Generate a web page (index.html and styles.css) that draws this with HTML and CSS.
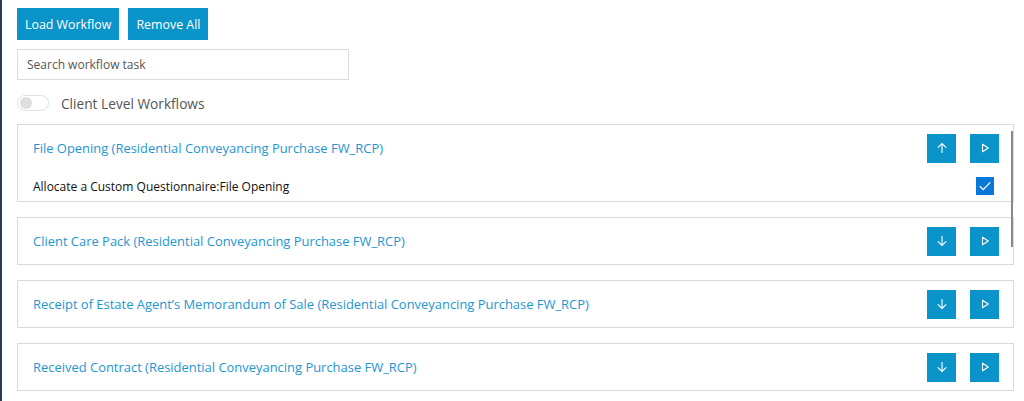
FILE: index.html
```html
<!DOCTYPE html>
<html>
<head>
<meta charset="utf-8">
<link rel="stylesheet" href="styles.css">
</head>
<body>
<div class="app">
  <div class="toolbar">
    <button class="btn">Load Workflow</button>
    <button class="btn">Remove All</button>
  </div>
  <input class="search" type="text" placeholder="Search workflow task">
  <div class="toggle-row">
    <span class="toggle"><span class="knob"></span></span>
    <span class="toggle-label">Client Level Workflows</span>
  </div>
  <div class="list">
    <div class="scrollthumb"></div>
    <div class="panel">
      <div class="panel-head">
        <span class="title">File Opening (Residential Conveyancing Purchase FW_RCP)</span>
        <span class="actions">
          <button class="icon-btn"><svg width="12" height="12" viewBox="0 0 12 12"><path d="M6 11V1.5M1.8 5.7L6 1.5l4.2 4.2" fill="none" stroke="#fff" stroke-width="1.1"/></svg></button>
          <button class="icon-btn"><svg width="12" height="12" viewBox="0 0 12 12"><path d="M3.5 2.2v7.6L9.3 6z" fill="none" stroke="#fff" stroke-width="1.1" stroke-linejoin="round"/></svg></button>
        </span>
      </div>
      <div class="panel-body">
        <span class="task">Allocate a Custom Questionnaire:File Opening</span>
        <span class="check"><svg width="14" height="14" viewBox="0 0 14 14"><path d="M1.8 7.2l3.4 3.4 7-7.2" fill="none" stroke="#fff" stroke-width="1.3"/></svg></span>
      </div>
    </div>
    <div class="panel">
      <div class="panel-head">
        <span class="title">Client Care Pack (Residential Conveyancing Purchase FW_RCP)</span>
        <span class="actions">
          <button class="icon-btn"><svg width="12" height="12" viewBox="0 0 12 12"><path d="M6 1v9.5M1.8 6.3L6 10.5l4.2-4.2" fill="none" stroke="#fff" stroke-width="1.1"/></svg></button>
          <button class="icon-btn"><svg width="12" height="12" viewBox="0 0 12 12"><path d="M3.5 2.2v7.6L9.3 6z" fill="none" stroke="#fff" stroke-width="1.1" stroke-linejoin="round"/></svg></button>
        </span>
      </div>
    </div>
    <div class="panel">
      <div class="panel-head">
        <span class="title">Receipt of Estate Agent’s Memorandum of Sale (Residential Conveyancing Purchase FW_RCP)</span>
        <span class="actions">
          <button class="icon-btn"><svg width="12" height="12" viewBox="0 0 12 12"><path d="M6 1v9.5M1.8 6.3L6 10.5l4.2-4.2" fill="none" stroke="#fff" stroke-width="1.1"/></svg></button>
          <button class="icon-btn"><svg width="12" height="12" viewBox="0 0 12 12"><path d="M3.5 2.2v7.6L9.3 6z" fill="none" stroke="#fff" stroke-width="1.1" stroke-linejoin="round"/></svg></button>
        </span>
      </div>
    </div>
    <div class="panel">
      <div class="panel-head">
        <span class="title">Received Contract (Residential Conveyancing Purchase FW_RCP)</span>
        <span class="actions">
          <button class="icon-btn"><svg width="12" height="12" viewBox="0 0 12 12"><path d="M6 1v9.5M1.8 6.3L6 10.5l4.2-4.2" fill="none" stroke="#fff" stroke-width="1.1"/></svg></button>
          <button class="icon-btn"><svg width="12" height="12" viewBox="0 0 12 12"><path d="M3.5 2.2v7.6L9.3 6z" fill="none" stroke="#fff" stroke-width="1.1" stroke-linejoin="round"/></svg></button>
        </span>
      </div>
    </div>
  </div>
</div>
</body>
</html>
```

FILE: styles.css
```css
html, body {
  margin: 0;
  padding: 0;
  background: #fff;
  height: 401px;
  overflow: hidden;
}
body {
  border-left: 2px solid #2e3b48;
  font-family: "Open Sans", "Noto Sans", sans-serif;
}
.app {
  padding: 8px 0 0 15px;
  width: 997px;
}
.toolbar {
  display: flex;
  gap: 9px;
}
.btn {
  height: 32px;
  padding: 0 8px;
  background: #0b94c9;
  color: #fff;
  border: 0;
  font-family: inherit;
  font-size: 12.4px;
  cursor: pointer;
}
.search {
  display: block;
  margin-top: 9px;
  width: 332px;
  height: 31px;
  box-sizing: border-box;
  border: 1px solid #dcdcdc;
  padding: 0 9px;
  font-family: inherit;
  font-size: 12px;
  color: #444;
  outline: none;
}
.search::placeholder {
  color: #555;
}
.toggle-row {
  display: flex;
  align-items: center;
  margin-top: 15px;
  height: 16px;
}
.toggle {
  width: 32px;
  height: 16px;
  box-sizing: border-box;
  border: 1px solid #e2e2e2;
  border-radius: 8px;
  display: flex;
  align-items: center;
  padding-left: 2px;
}
.knob {
  width: 12px;
  height: 12px;
  border-radius: 50%;
  background: #dedede;
}
.toggle-label {
  margin-left: 12px;
  font-size: 13.7px;
  color: #555;
}
.list {
  position: relative;
  margin-top: 13px;
  display: flex;
  flex-direction: column;
  gap: 15px;
}
.scrollthumb {
  position: absolute;
  left: 994px;
  top: 7px;
  width: 2px;
  height: 116px;
  background: #8a8a8a;
}
.panel {
  border: 1px solid #dadada;
}
.panel-head {
  display: flex;
  align-items: center;
  justify-content: space-between;
  height: 46px;
  padding: 0 14px 0 15px;
}
.title {
  font-size: 12.95px;
  color: #1e96d2;
}
.actions {
  display: flex;
  gap: 14px;
}
.icon-btn {
  width: 29px;
  height: 29px;
  padding: 0;
  border: 0;
  background: #0b94c9;
  display: flex;
  align-items: center;
  justify-content: center;
}
.panel-body {
  display: flex;
  align-items: center;
  justify-content: space-between;
  height: 30px;
  padding: 0 19px 0 15px;
}
.task {
  font-size: 12px;
  color: #111;
}
.check {
  width: 18px;
  height: 18px;
  background: #0a78d6;
  display: flex;
  align-items: center;
  justify-content: center;
}
```
